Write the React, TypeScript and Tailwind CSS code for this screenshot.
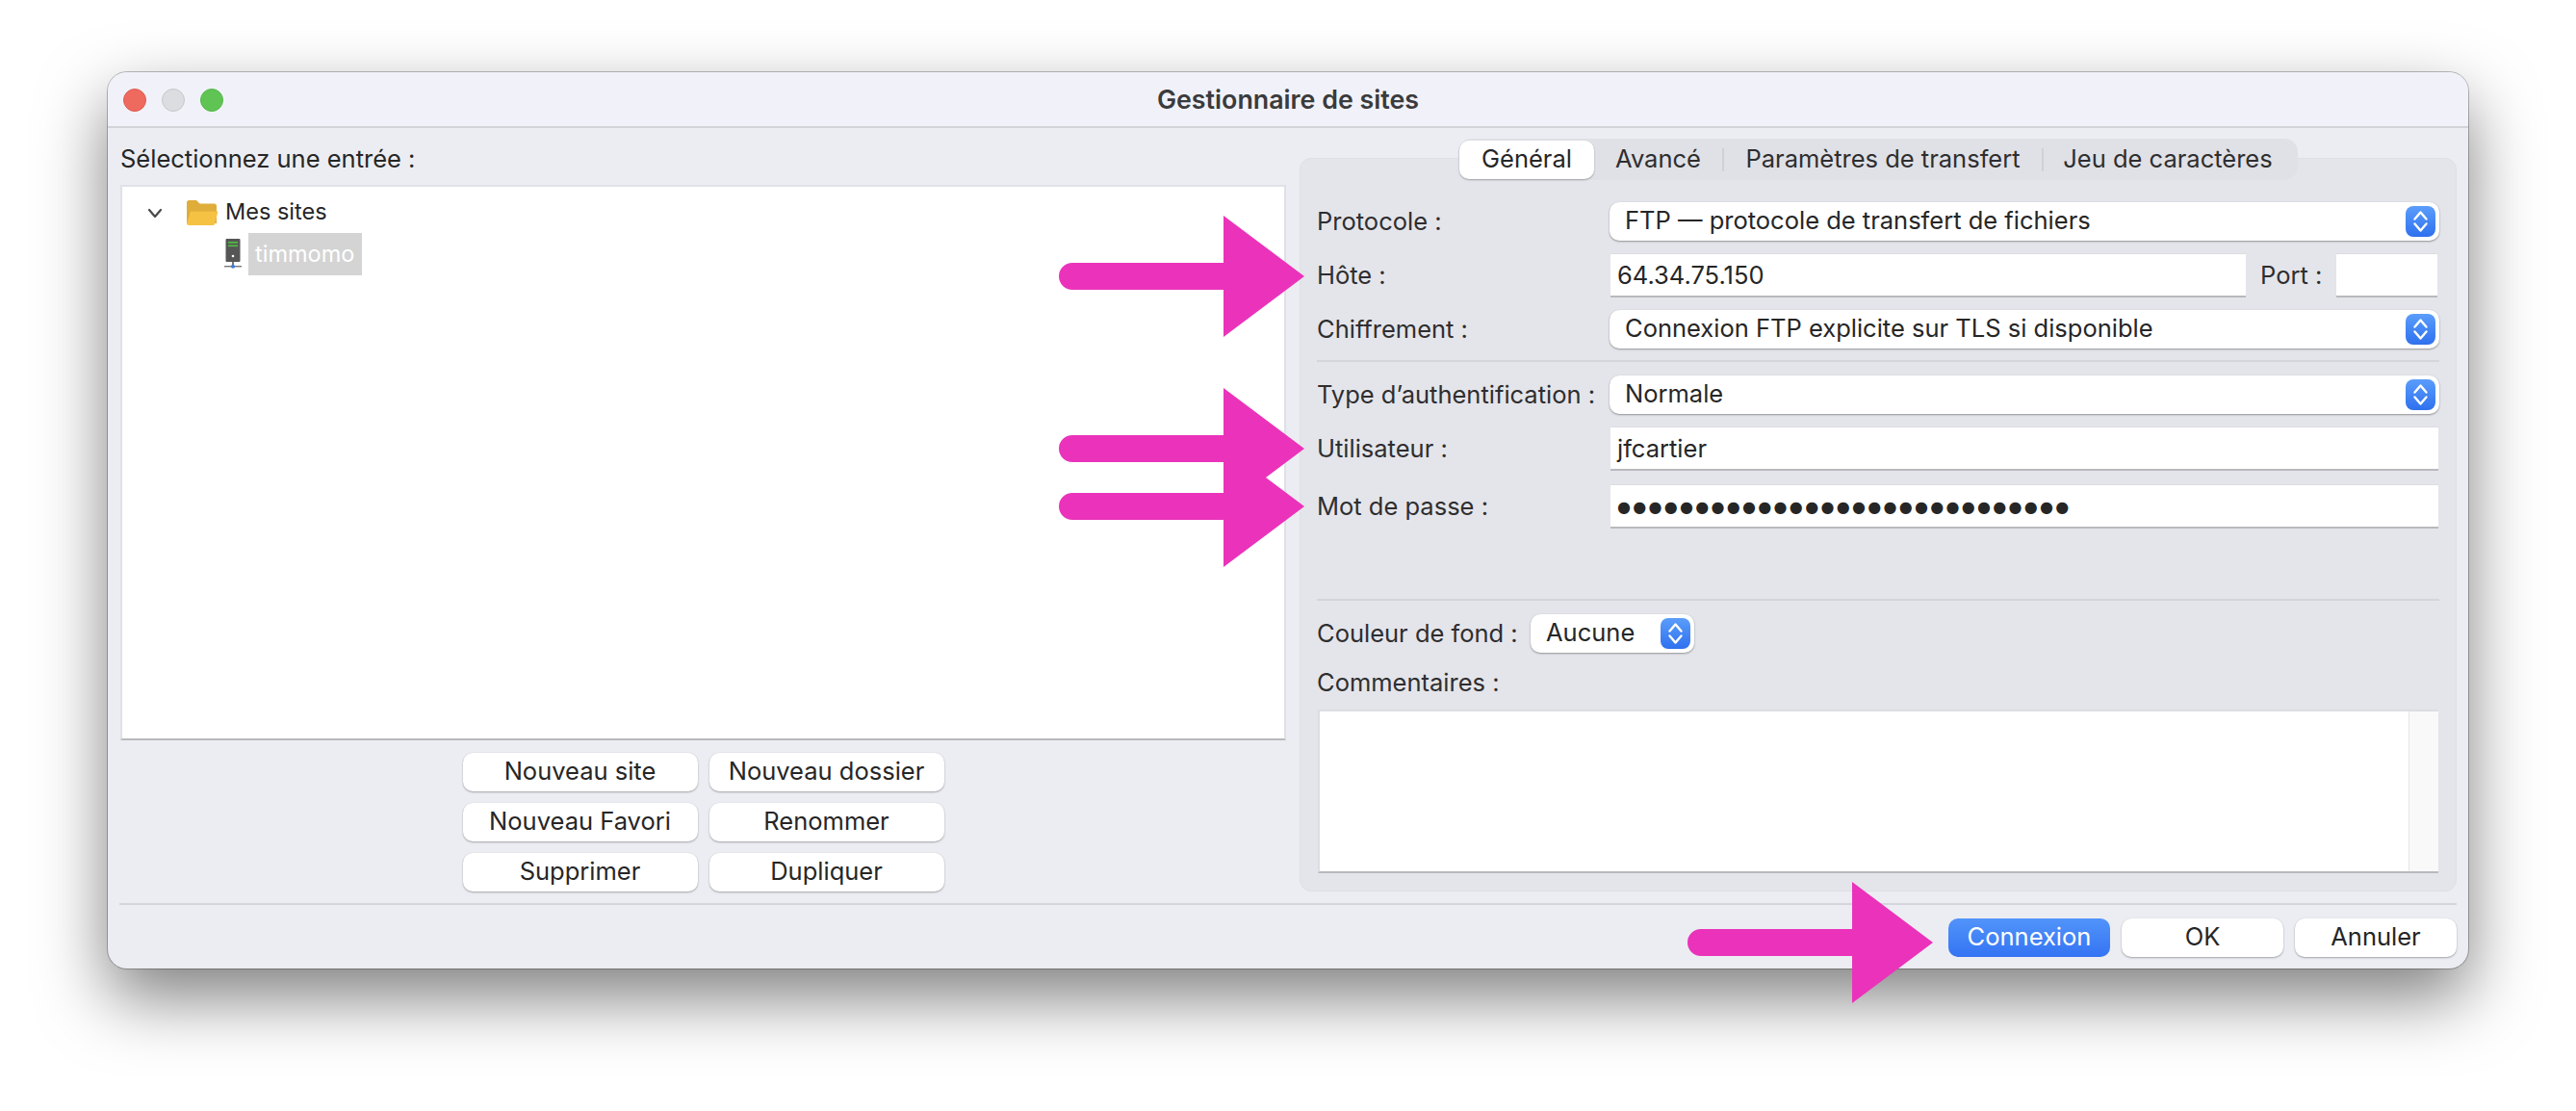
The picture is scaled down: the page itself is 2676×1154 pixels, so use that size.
import React from "react";

const FONT = "font-['Inter','Liberation_Sans',sans-serif]";

function Stepper() {
  return (
    <span className="flex h-[32px] w-[31px] items-center justify-center rounded-[8px] bg-gradient-to-b from-[#5b9dfb] to-[#2f70ee]">
      <svg width="31" height="32" viewBox="0 0 31 32" fill="none" stroke="#ffffff" strokeWidth="2.4" strokeLinecap="round" strokeLinejoin="round">
        <path d="M9.5 13.5 15.5 6.5 21.5 13.5" />
        <path d="M9.5 18.5 15.5 25.5 21.5 18.5" />
      </svg>
    </span>
  );
}

function Select({ text, className }: { text: string; className: string }) {
  return (
    <div className={`flex h-[40px] items-center justify-between rounded-[10px] bg-white pl-[16px] pr-[4px] text-[25.5px] text-[#262626] shadow-[0_1px_2px_rgba(0,0,0,0.35),0_0_1px_rgba(0,0,0,0.12)] ${className}`}>
      <span className="-mt-[2px]">{text}</span>
      <Stepper />
    </div>
  );
}

function Field({ children, className }: { children?: React.ReactNode; className: string }) {
  return (
    <div className={`flex h-[46px] items-center border-t border-t-[#dcdce1] border-b-2 border-b-[#b9b9bd] bg-white pl-[7px] pt-[2px] text-[25.5px] text-[#262626] ${className}`}>
      {children}
    </div>
  );
}

function Label({ children, className = "" }: { children: React.ReactNode; className?: string }) {
  return <div className={`text-[25.5px] text-[#2e2e30] ${className}`}>{children}</div>;
}

function Row({ label, children, className = "" }: { label: string; children: React.ReactNode; className?: string }) {
  return (
    <div className={`flex items-center ${className}`}>
      <Label className="w-[304px] shrink-0 pt-[1px]">{label}</Label>
      {children}
    </div>
  );
}

function Btn({ children }: { children: React.ReactNode }) {
  return (
    <div className="flex h-[40px] items-center justify-center rounded-[10px] bg-white pb-[2px] text-[25.5px] text-[#262626] shadow-[0_1px_2px_rgba(0,0,0,0.3),0_0_1px_rgba(0,0,0,0.12)]">
      {children}
    </div>
  );
}

function Arrow({ x0, cy }: { x0: number; cy: number }) {
  const hx = x0 + 171;
  const tip = x0 + 255;
  return (
    <path
      d={`M${x0 + 14} ${cy - 14} H${hx} V${cy - 63} L${tip} ${cy} L${hx} ${cy + 63} V${cy + 14} H${x0 + 14} A14 14 0 0 1 ${x0 + 14} ${cy - 14} Z`}
      fill="#ea33ba"
    />
  );
}

function Sep() {
  return <span className="h-[24px] w-[2px] shrink-0 bg-[#d0d1d7]" />;
}

export default function App() {
  return (
    <div className={`relative h-[1154px] w-[2676px] overflow-hidden bg-white pl-[112px] pt-[75px] ${FONT}`}>
      <div className="flex h-[931px] w-[2452px] flex-col rounded-[20px] bg-[#ecedf2] shadow-[0_30px_70px_0_rgba(0,0,0,0.5),0_0_0_1px_rgba(0,0,0,0.25)]">
        {/* Title bar */}
        <div className="relative flex h-[58px] shrink-0 items-center justify-center rounded-t-[20px] border-b-2 border-b-[#d3d4da] bg-[#f1f2f9]">
          <div className="absolute left-[16px] top-[17px] flex gap-[16px]">
            <span className="h-[24px] w-[24px] rounded-full border border-[#df5a50] bg-[#ee6a5f]" />
            <span className="h-[24px] w-[24px] rounded-full border border-[#c6c7ca] bg-[#dcdde0]" />
            <span className="h-[24px] w-[24px] rounded-full border border-[#54b849] bg-[#5fc454]" />
          </div>
          <span className="text-[26.8px] font-semibold text-[#3b3b3d]">Gestionnaire de sites</span>
        </div>

        {/* Main */}
        <div className="flex h-[805px] shrink-0 pl-[13px]">
          {/* Left column */}
          <div className="flex w-[1211px] shrink-0 flex-col">
            <div className="flex h-[59px] items-center pt-[6px] text-[25.5px] text-[#262626]">Sélectionnez une entrée :</div>
            <div className="flex h-[577px] flex-col border-2 border-[#e0e1e6] border-b-[#b9b9bd] bg-white">
              <div className="flex h-[48px] items-center pl-[26px] pt-[6px]">
                <svg width="16" height="11" viewBox="0 0 16 11" fill="none" stroke="#4a4a4a" strokeWidth="2.2" strokeLinecap="round" strokeLinejoin="round">
                  <path d="M2 2 8 9 14 2" />
                </svg>
                <svg className="ml-[24px]" width="34" height="30" viewBox="0 0 34 30">
                  <path d="M1 4.5C1 3 2 2 3.5 2H11L14.5 5.5H29.5C31 5.5 32 6.5 32 8V26H1Z" fill="#dfad3a" />
                  <path d="M5 13.5H32.5C33.2 13.5 33.4 14 33.2 14.7L30 26.5C29.8 27.5 29 28 28 28H3C1.6 28 1 27.2 1.2 26Z" fill="#f6c244" />
                </svg>
                <span className="-mt-[2px] ml-[7px] text-[23.5px] text-[#262626]">Mes sites</span>
              </div>
              <div className="flex h-[44px] items-center pl-[105px]">
                <svg width="20" height="34" viewBox="0 0 20 34">
                  <rect x="2.5" y="1" width="15" height="24" rx="1" fill="#565656" />
                  <rect x="5" y="4" width="10" height="1.6" fill="#4fc23f" />
                  <rect x="5" y="7.5" width="10" height="1.6" fill="#4fc23f" />
                  <circle cx="10" cy="19" r="1.3" fill="#ffffff" />
                  <rect x="9" y="25" width="2" height="4" fill="#777777" />
                  <rect x="1" y="29" width="18" height="1.4" fill="#777777" />
                  <circle cx="10" cy="29.7" r="2" fill="#3a7ae0" />
                </svg>
                <div className="ml-[6px] flex h-[44px] w-[118px] items-center bg-[#d4d4d4] pl-[7px] text-[23.5px] text-white">timmomo</div>
              </div>
            </div>
            <div className="mx-auto mt-[13px] grid w-[500px] grid-cols-2 gap-x-[12px] gap-y-[12px]">
              <Btn>Nouveau site</Btn>
              <Btn>Nouveau dossier</Btn>
              <Btn>Nouveau Favori</Btn>
              <Btn>Renommer</Btn>
              <Btn>Supprimer</Btn>
              <Btn>Dupliquer</Btn>
            </div>
          </div>

          {/* Right column */}
          <div className="ml-[14px] mt-[31px] flex h-[762px] w-[1202px] shrink-0 flex-col rounded-[12px] border border-[#dfe0e5] bg-[#e4e5ea] px-[17px]">
            <div className="mx-auto -mt-[21px] flex h-[43px] w-[872px] shrink-0 items-center whitespace-nowrap rounded-[14px] bg-[#e0e1e6] pl-[1px] text-[25.5px] text-[#2e2e30]">
              <div className="flex h-[40px] w-[140px] items-center justify-center rounded-[10px] bg-white text-[#262626] shadow-[0_1px_2px_rgba(0,0,0,0.3)]">Général</div>
              <div className="flex h-[40px] w-[133px] items-center justify-center">Avancé</div>
              <Sep />
              <div className="flex h-[40px] w-[330px] items-center justify-center">Paramètres de transfert</div>
              <Sep />
              <div className="flex h-[40px] w-[258px] items-center justify-center">Jeu de caractères</div>
            </div>

            <Row label="Protocole :" className="mt-[23px]">
              <Select text="FTP — protocole de transfert de fichiers" className="flex-1" />
            </Row>
            <Row label="Hôte :" className="mt-[13px]">
              <Field className="ml-[1px] w-[660px]">64.34.75.150</Field>
              <Label className="ml-[15px] w-[79px]">Port :</Label>
              <Field className="w-[105px]" />
            </Row>
            <Row label="Chiffrement :" className="mt-[13px]">
              <Select text="Connexion FTP explicite sur TLS si disponible" className="flex-1" />
            </Row>
            <div className="mt-[12px] h-[2px] bg-[#d4d5da]" />
            <Row label="Type d’authentification :" className="mt-[14px]">
              <Select text="Normale" className="flex-1" />
            </Row>
            <Row label="Utilisateur :" className="mt-[13px]">
              <Field className="mx-[1px] flex-1">jfcartier</Field>
            </Row>
            <Row label="Mot de passe :" className="mt-[14px]">
              <Field className="mx-[1px] flex-1">
                <span className="font-['DejaVu_Sans'] text-[16px] tracking-[2.3px]">●●●●●●●●●●●●●●●●●●●●●●●●●●●●●</span>
              </Field>
            </Row>
            <div className="mt-[73px] h-[2px] bg-[#d4d5da]" />
            <div className="mt-[14px] flex items-center">
              <Label className="w-[222px] shrink-0">Couleur de fond :</Label>
              <Select text="Aucune" className="w-[170px]" />
            </div>
            <Label className="mt-[16px] flex h-[30px] items-center">Commentaires :</Label>
            <div className="mx-[1px] mt-[13px] flex h-[170px] justify-end border-b-2 border-l-2 border-t-2 border-b-[#b9b9bd] border-l-[#dcdde2] border-t-[#dcdde2] bg-white">
              <div className="w-[31px] border-l border-l-[#e6e6ea] bg-[#f9f9fa]" />
            </div>
          </div>
        </div>

        {/* Footer */}
        <div className="mx-[12px] h-[2px] bg-[#d5d6dd]" />
        <div className="mt-[14px] flex justify-end gap-[12px] pr-[12px]">
          <div className="flex h-[40px] w-[168px] items-center justify-center rounded-[10px] bg-gradient-to-b from-[#5294fa] to-[#3473f3] pb-[2px] text-[25.5px] text-white">Connexion</div>
          <div className="w-[168px]"><Btn>OK</Btn></div>
          <div className="w-[168px]"><Btn>Annuler</Btn></div>
        </div>
      </div>

      {/* Annotation arrows over the screenshot */}
      <svg className="pointer-events-none absolute left-0 top-0" width="2676" height="1154" viewBox="0 0 2676 1154">
        <Arrow x0={1100} cy={287} />
        <Arrow x0={1100} cy={466} />
        <Arrow x0={1100} cy={526} />
        <Arrow x0={1753} cy={979} />
      </svg>
    </div>
  );
}
